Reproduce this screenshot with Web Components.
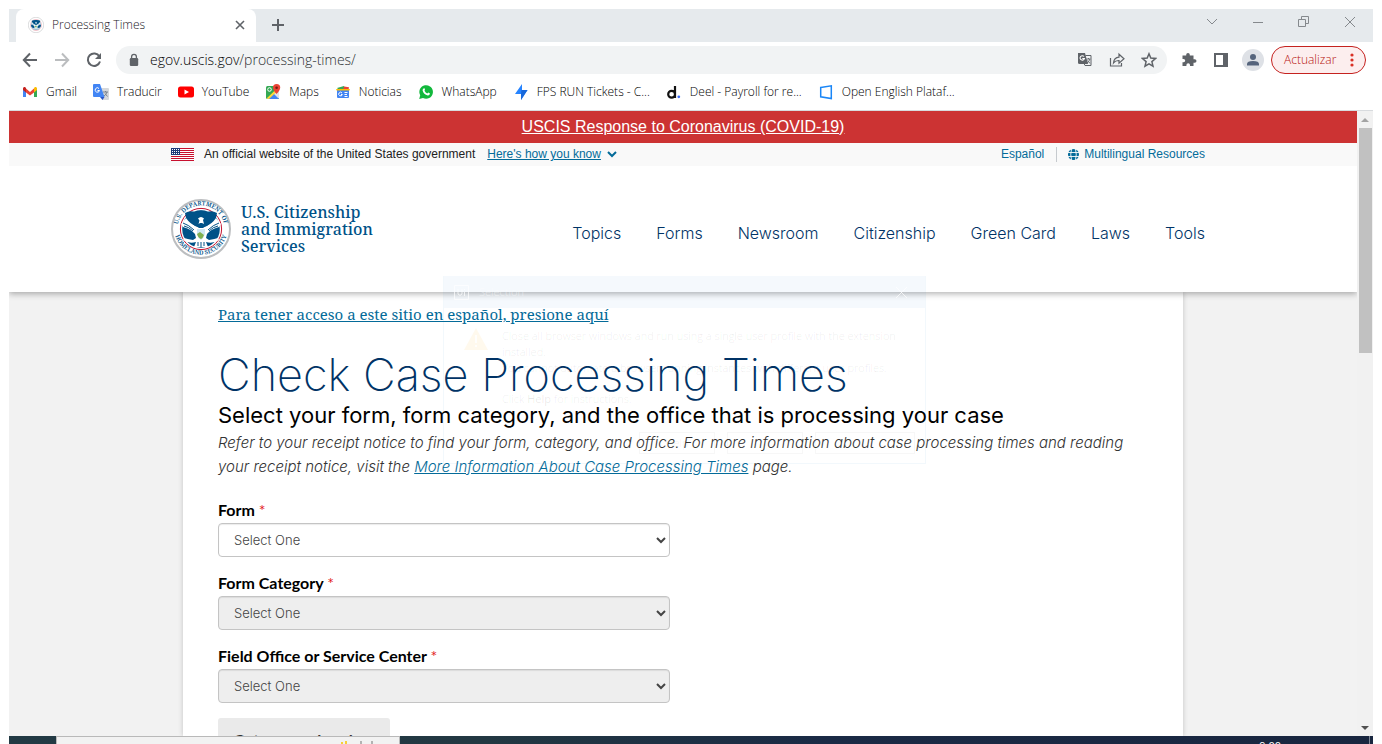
<!DOCTYPE html>
<html lang="en">
<head>
<meta charset="utf-8">
<title>Processing Times</title>
<style>
  html, body { height: 100%; margin: 0; }
  body { background: #fff; overflow: hidden; font-family: "Open Sans", sans-serif; }
</style>
</head>
<body>
<desk-top></desk-top>

<template id="t-desk-top">
  <style>
    :host { display: flex; flex-direction: column; height: 100vh; box-sizing: border-box; padding: 9px 9px 0; position: relative; }
    .pane { flex: 1; min-height: 0; display: flex; border-top: 1px solid #d8dbde; }
    uscis-page { flex: 1; min-width: 0; overflow: hidden; }
    ghost-dialog { position: absolute; left: 443px; top: 276px; }
  </style>
  <tab-strip></tab-strip>
  <tool-bar></tool-bar>
  <bookmarks-bar></bookmarks-bar>
  <div class="pane">
    <uscis-page></uscis-page>
    <scroll-bar></scroll-bar>
  </div>
  <task-bar></task-bar>
  <ghost-dialog></ghost-dialog>
</template>

<template id="t-dhs-seal">
  <style>
    :host { display: block; width: 60px; height: 60px; }
    svg { display: block; width: 100%; height: 100%; }
    text { font: 600 6px "Noto Serif", serif; fill: #005288; }
    .words { display: var(--seal-words, inline); }
  </style>
  <svg viewBox="0 0 60 60" role="img" aria-label="Department of Homeland Security seal">
    <circle cx="30" cy="30" r="29" fill="#fff" stroke="#bcbec0" stroke-width="2"/>
    <circle cx="30" cy="30" r="20.6" fill="#fff" stroke="#c41230" stroke-width="1"/>
    <defs>
      <path id="top" d="M7.300 36.500 A23.600 23.600 0 1 1 52.700 36.500"/>
      <path id="bot" d="M3.600 33.500 A26.800 26.800 0 0 0 56.400 33.500"/>
    </defs>
    <g class="words">
      <text><textPath href="#top" startOffset="50%" text-anchor="middle">U.S. DEPARTMENT OF</textPath></text>
      <text><textPath href="#bot" startOffset="50%" text-anchor="middle">HOMELAND SECURITY</textPath></text>
    </g>
    <circle cx="30" cy="30" r="18.800" fill="#005288"/>
    <path d="M16 18 L10 25 L12 28 Q20 30 24 35 L25 39 L22 41 Q16 40 13 39 L12 41 Q18 45 25 43 L23 48 H37 L35 43 Q42 45 48 41 L47 39 Q44 40 38 41 L35 39 L36 35 Q40 30 48 28 L50 25 L44 18 Q42 22 36 27 L33 28 H27 L24 27 Q18 22 16 18Z" fill="#fff"/>
    <path d="M14 14 Q19 11 24 13 Q30 10 36 13 Q41 11 46 14 L45 19 Q41 25 35 27 L32 29 H28 L25 27 Q19 25 15 19Z" fill="#005288"/>
    <path d="M12 24 Q18 26 23 31 M13 27 Q18 28 22 32 M48 24 Q42 26 37 31 M47 27 Q42 28 38 32" fill="none" stroke="#005288"/>
    <path d="M27 19.500 Q30 16.500 33 19.500 L32 21 L33 25 L31 24 H29 L27.500 25 L28.500 21.500Z" fill="#fff"/>
    <path d="M26 30 H34 V35 Q33 39 30 41 Q27 39 26 35Z" fill="#cfe7f2"/>
    <path d="M26 35 L29 33 L33 36 Q32 39 30 40 Q27 39 26 35Z" fill="#7fb04f"/>
    <path d="M27 43v4 M30 43v5 M33 43v4" stroke="#005288"/>
  </svg>
</template>

<template id="t-tab-strip">
  <style>
    :host { display: flex; height: 33px; background: #e6eaed; padding-left: 7px; }
    .tab { display: flex; align-items: center; width: 240px; box-sizing: border-box; padding: 0 8px 2px 12px; background: #fff; border-radius: 8px 8px 0 0; font: 300 12px/16px "Open Sans", sans-serif; color: #1c2026; }
    .tab dhs-seal { width: 16px; height: 16px; margin-right: 8px; --seal-words: none; }
    .tab span { flex: 1; }
    button { border: 0; background: none; padding: 0; display: grid; place-items: center; height: 16px; width: 16px; }
    .new { width: 44px; height: 31px; }
    .win { margin-left: auto; display: flex; }
    .win button { width: 46px; height: 26px; }
    svg { fill: none; stroke: #5f6368; }
    .win svg { stroke: #85898d; }
  </style>
  <div class="tab"><dhs-seal></dhs-seal><span>Processing Times</span>
    <button aria-label="Close tab"><svg width="10" height="10" stroke-width="1.600"><path d="M1 1l8 8M9 1l-8 8"/></svg></button></div>
  <button class="new" aria-label="New tab"><svg width="14" height="14" stroke-width="2"><path d="M7 1v12M1 7h12"/></svg></button>
  <div class="win">
    <button aria-label="Search tabs"><svg width="12" height="8"><path d="M1 1l5 5 5-5"/></svg></button>
    <button aria-label="Minimize"><svg width="12" height="3"><path d="M1 1.500h10"/></svg></button>
    <button aria-label="Restore"><svg width="12" height="12"><path d="M.5 3.500h7v7h-7zM3.500 3V.5h7v7H8"/></svg></button>
    <button aria-label="Close"><svg width="12" height="12"><path d="M1 1l10 10M11 1L1 11"/></svg></button>
  </div>
</template>

<template id="t-tool-bar">
  <style>
    :host { display: flex; align-items: center; height: 36px; padding: 0 7px 0 5px; background: #fff; }
    button { border: 0; background: none; padding: 0; width: 32px; height: 28px; display: grid; place-items: center; }
    .omni { flex: 1; min-width: 0; display: flex; align-items: center; height: 28px; margin: 0 6px; border-radius: 14px; background: #f1f3f4; padding: 0 2px 0 12px; }
    .omni .lock { margin-right: 10px; }
    .url { flex: 1; font: 300 14px/20px "Open Sans", sans-serif; color: #2b2e31; }
    .url b { font-weight: 300; color: #000; }
    .avatar { width: 22px; height: 22px; margin: 0 7px 0 5px; border-radius: 50%; background: #dee1e6; }
    .update { display: flex; align-items: center; justify-content: space-between; width: 95px; box-sizing: border-box; padding: 0 11px 0 12px; border: 1px solid #c5221f; border-radius: 14px; background: #fceeee; color: #b81410; font: 300 12px/16px "Open Sans", sans-serif; }
    svg { display: block; }
  </style>
  <button aria-label="Back"><svg width="16" height="16" fill="none" stroke="#5f6368" stroke-width="2"><path d="M15 8H2M8 1.500L1.800 8 8 14.500"/></svg></button>
  <button aria-label="Forward"><svg width="16" height="16" fill="none" stroke="#bbbdbf" stroke-width="2"><path d="M1 8h13M8 1.500L14.200 8 8 14.500"/></svg></button>
  <button aria-label="Reload"><svg width="16" height="16" fill="none" stroke="#5f6368" stroke-width="2"><path d="M13.400 4.500A6.200 6.200 0 1 0 14 9.500"/><path d="M15 1v6H9z" fill="#5f6368" stroke="none"/></svg></button>
  <div class="omni">
    <svg class="lock" width="12" height="14"><path d="M3 5h6q1.200 0 1.200 1.200v5.600q0 1.200-1.200 1.200H3q-1.200 0-1.200-1.200V6.200Q1.800 5 3 5z" fill="#5f6368"/><path d="M3.600 6V3.700a2.400 2.400 0 0 1 4.800 0V6" fill="none" stroke="#5f6368" stroke-width="1.300"/></svg>
    <div class="url"><b>egov.uscis.gov</b>/processing-times/</div>
    <button aria-label="Translate page"><svg width="16" height="16"><path d="M1 1h7l3 11H2.500Q1 12 1 10.500z" fill="#5f6368"/><path d="M8.500 3.500h5.500v10H8l-1-2" fill="none" stroke="#5f6368"/><path d="M7 4.500A2.200 2.200 0 1 0 7.400 6.500H5.300" fill="none" stroke="#fff" stroke-width="1.100"/><path d="M9.500 7h4M11.500 6v1M12.800 7q-.6 3-3 4M10.500 8.500q1 2 2.700 2.700" fill="none" stroke="#5f6368" stroke-width=".9"/></svg></button>
    <button aria-label="Share"><svg width="16" height="16" fill="none" stroke="#5f6368" stroke-width="1.200"><path d="M1.500 6v8h11v-3"/><path d="M4.500 11Q5 5.500 10 5.200V2.200l5 4.600-5 4.400V8.500Q6.500 8.300 4.500 11z"/></svg></button>
    <button aria-label="Bookmark this page"><svg width="16" height="16" fill="none" stroke="#5f6368" stroke-width="1.500"><path d="M8 1.800l1.800 4.300 4.700.4-3.600 3.100 1.100 4.600L8 11.800l-4 2.400 1.100-4.600L1.500 6.500l4.700-.4z"/></svg></button>
  </div>
  <button aria-label="Extensions"><svg width="16" height="16"><path d="M1.500 3.500h3.700V2.700a1.800 1.800 0 0 1 3.600 0v.8h3.700v3.700h1.200a1.800 1.800 0 0 1 0 3.600h-1.200V14H9v-1a1.800 1.800 0 0 0-3.600 0v1H1.500v-3.700h1a1.700 1.700 0 0 0 0-3.400h-1z" fill="#5f6368"/></svg></button>
  <button aria-label="Side panel"><svg width="14" height="14"><path d="M0 0h14v14H0zM2 2v10h7V2z" fill="#5f6368" fill-rule="evenodd"/></svg></button>
  <button class="avatar" aria-label="Profile"><svg width="14" height="14" fill="#55647c"><circle cx="7" cy="4" r="3"/><path d="M1 12.500V11Q1 8 7 8t6 3v1.500z"/></svg></button>
  <button class="update"><span>Actualizar</span><svg width="4" height="14" fill="#d93025"><circle cx="2" cy="2" r="1.600"/><circle cx="2" cy="7" r="1.600"/><circle cx="2" cy="12" r="1.600"/></svg></button>
</template>

<template id="t-bookmark-item">
  <style>
    :host { display: block; }
    a { display: flex; align-items: center; gap: 8px; color: #000; text-decoration: none; font: 300 12px/16px "Open Sans", sans-serif; white-space: nowrap; }
    ::slotted(svg) { display: block; width: 16px; height: 16px; }
  </style>
  <a href="#"><slot name="icon"></slot><slot></slot></a>
</template>

<template id="t-bookmarks-bar">
  <style>
    :host { display: flex; align-items: center; gap: 16px; height: 32px; box-sizing: border-box; padding: 0 12px 4px 13px; background: #fff; }
  </style>
  <bookmark-item><svg slot="icon" viewBox="0 0 16 16"><path d="M1 4v9h3V6z" fill="#4285f4"/><path d="M15 4v9h-3V6z" fill="#34a853"/><path d="M4 4.500L8 8l4-3.500v4L8 11.500 4 8.500z" fill="#ea4335"/><path d="M1 4.500Q1 2.500 3 3l1 1v4.500L1 6z" fill="#c5221f"/><path d="M15 4.500Q15 2.500 13 3l-1 1v4.500L15 6z" fill="#fbbc04"/></svg>Gmail</bookmark-item>
  <bookmark-item><svg slot="icon" viewBox="0 0 16 16"><path d="M7 4h8q1 0 1 1v10q0 1-1 1H9z" fill="#d5d8dc"/><path d="M1 0h6l4.500 13H1q-1 0-1-1V1q0-1 1-1z" fill="#4285f4"/><path d="M7 13h4.500L9.500 16z" fill="#2a56c6"/><path d="M6 4.500A2.200 2.200 0 1 0 6.500 6.500H4.500" fill="none" stroke="#fff"/><path d="M10 8h5M12.500 7v1M14 8q-1 3-3 4M12 9.500l2.500 3" fill="none" stroke="#6f7b86" stroke-width=".9"/></svg>Traducir</bookmark-item>
  <bookmark-item><svg slot="icon" viewBox="0 0 16 16"><rect y="2.500" width="16" height="11" rx="2.500" fill="#f00"/><path d="M6.500 5.500v5L11 8z" fill="#fff"/></svg>YouTube</bookmark-item>
  <bookmark-item><svg slot="icon" viewBox="0 0 16 16"><rect x="1" y="2" width="13" height="13" rx="1.500" fill="#34a853"/><path d="M2 15L13 4l1 1v9z" fill="#dfe3e7"/><path d="M8 9l6 6H3z" fill="#4285f4"/><path d="M1.500 14.500L14 2.500v3L4 15z" fill="#fdd835"/><circle cx="4.500" cy="5.500" r="1.800" fill="none" stroke="#fff"/><path d="M11.500 10Q8 6 8 3.700a3.600 3.600 0 0 1 7.200 0Q15.200 6 11.500 10z" fill="#ea4335"/><circle cx="11.600" cy="3.800" r="1.300" fill="#7a1a12"/></svg>Maps</bookmark-item>
  <bookmark-item><svg slot="icon" viewBox="0 0 16 16"><path d="M2 4l7-2 1 3H3z" fill="#34a853"/><path d="M9 2.500l5 .8-.6 3H8z" fill="#ea4335"/><path d="M1 5h14l-1 2H2z" fill="#fbbc04"/><path d="M2 6.500h12V13q0 1-1 1H3q-1 0-1-1z" fill="#4285f4"/><path d="M7 9a1.800 1.800 0 1 0 .3 1.500H6M9.500 8.500h3M9.500 10.500h2.500M9.500 12.500h3" fill="none" stroke="#fff"/></svg>Noticias</bookmark-item>
  <bookmark-item><svg slot="icon" viewBox="0 0 16 16"><path d="M1.200 15l1-3.700A6.800 6.800 0 1 1 5 14z" fill="#12b83c"/><path d="M5.500 4.500q1.200-.8 1.500 1l-.5 1.300Q7.500 8.700 9.300 9.500l1-.9 1.700.9Q11.500 11.700 9.800 11.500 5.500 10.500 4.600 6.500 4.600 5 5.500 4.500z" fill="#fff"/></svg>WhatsApp</bookmark-item>
  <bookmark-item><svg slot="icon" viewBox="0 0 16 16"><path d="M9 0v6h5.500L8 16v-6H2z" fill="#2684ff"/><path d="M8.500 6h6L8 16v-6z" fill="#1868db"/></svg>FPS RUN Tickets - C...</bookmark-item>
  <bookmark-item><svg slot="icon" viewBox="0 0 16 16"><path d="M9 2V14M9 10.200a3.400 3.400 0 1 0-6.800 0 3.400 3.400 0 0 0 6.800 0z" fill="none" stroke="#111" stroke-width="2.200"/><circle cx="12.800" cy="12.800" r="1.400" fill="#3b6cf6"/></svg>Deel - Payroll for re...</bookmark-item>
  <bookmark-item><svg slot="icon" viewBox="0 0 16 16"><path d="M2.700 3.500L13.300 1.800v12.700L2.700 12.800z" fill="none" stroke="#1a86f7" stroke-width="1.500"/></svg>Open English Plataf...</bookmark-item>
</template>

<template id="t-scroll-bar">
  <style>
    :host { display: flex; flex-direction: column; width: 16px; background: #f1f1f1; }
    .up, .down { height: 17px; display: grid; place-items: center; }
    .track { flex: 1; padding: 0 1px 0 2px; }
    .thumb { height: 38%; background: #c1c1c1; }
    svg { display: block; }
  </style>
  <div class="up"><svg width="8" height="4"><path d="M0 4l4-4 4 4z" fill="#a3a3a3"/></svg></div>
  <div class="track"><div class="thumb"></div></div>
  <div class="down"><svg width="8" height="4"><path d="M0 0l4 4 4-4z" fill="#505050"/></svg></div>
</template>

<template id="t-uscis-page">
  <style>
    :host { display: flex; flex-direction: column; background: #f2f2f2; }
    .main { flex: 1; min-height: 0; display: flex; justify-content: center; }
    form-card { width: 1000px; max-width: 100%; }
  </style>
  <site-header></site-header>
  <div class="main"><form-card></form-card></div>
</template>

<template id="t-site-header">
  <style>
    :host { display: block; position: relative; box-shadow: 0 2px 6px rgba(0,0,0,.3); background: #fff; font-family: "Liberation Sans", sans-serif; }
    .alert { background: #cc3333; text-align: center; font-size: 16px; line-height: 32px; }
    .alert a { color: #fff; }
    .gov { background: #f9f9f9; font-size: 12px; line-height: 23px; color: #212121; }
    .wrap { display: flex; align-items: center; max-width: 1034px; margin: 0 auto; padding-left: 10px; }
    .gov a { color: #046b99; }
    .plain { text-decoration: none; display: flex; align-items: center; gap: 5px; }
    .flag { margin-right: 10px; }
    .know { display: flex; align-items: center; gap: 6px; margin-left: 12px; }
    .langs { margin-left: auto; display: flex; align-items: center; }
    .langs i { width: 1px; height: 15px; background: #c6cace; margin: 0 11px 0 12px; }
    .head { height: 126px; }
    .brand { display: flex; align-items: center; gap: 10px; text-decoration: none; color: #005288; font: 500 16px/17px "Noto Serif", serif; }
    nav { margin-left: auto; padding-top: 8px; display: flex; gap: 35px; font: 300 16px/24px Inter, sans-serif; }
    nav a { color: #003366; text-decoration: none; }
    svg { display: block; }
  </style>
  <div class="alert"><a href="#">USCIS Response to Coronavirus (COVID-19)</a></div>
  <div class="gov"><div class="wrap">
    <svg class="flag" width="23" height="13"><path fill="#fff" d="M0 0h23v13H0z"/><path d="M0 .5h23M0 2.500h23M0 4.500h23M0 6.500h23M0 8.500h23M0 10.500h23M0 12.500h23" stroke="#c8102e"/><path fill="#1f3b7a" d="M0 0h9v7H0z"/><path d="M1 1.500h8M1 3.500h8M1 5.500h8" stroke="#fff" stroke-dasharray="1 1"/></svg>
    <span>An official website of the United States government</span>
    <span class="know"><a href="#">Here's how you know</a><svg width="10" height="7" fill="none" stroke="#046b99" stroke-width="2"><path d="M1 1l4 4 4-4"/></svg></span>
    <div class="langs"><a class="plain" href="#">Español</a><i></i><a class="plain" href="#"><svg width="11" height="11"><circle cx="5.500" cy="5.500" r="5.500" fill="#046b99"/><path d="M0 3.500h11M0 7.500h11M3.500 0Q2 5.500 3.500 11M7.500 0Q9 5.500 7.500 11" fill="none" stroke="#f9f9f9" stroke-width=".9"/></svg>Multilingual Resources</a></div>
  </div></div>
  <div class="wrap head">
    <a class="brand" href="#"><dhs-seal></dhs-seal><span>U.S. Citizenship<br>and Immigration<br>Services</span></a>
    <nav><a href="#">Topics</a><a href="#">Forms</a><a href="#">Newsroom</a><a href="#">Citizenship</a><a href="#">Green Card</a><a href="#">Laws</a><a href="#">Tools</a></nav>
  </div>
</template>

<template id="t-select-field">
  <style>
    :host { display: block; margin-bottom: 16px; }
    label { display: block; margin-bottom: 3px; font: 700 16px/20px Lato, sans-serif; color: #000; }
    label span { color: #e31c1c; font-weight: 400; }
    select { display: block; width: 452px; max-width: 100%; height: 34px; box-sizing: border-box; padding: 0 0 0 11px; border: 1px solid #c4c4c4; border-radius: 4px; background-color: #fff; color: #444; box-shadow: inset 0 1px 1px rgba(0,0,0,.08); font: 300 13px/20px Inter, sans-serif; }
    select:disabled { background-color: #eee; opacity: 1; }
  </style>
  <label for="s"><slot></slot> <span>*</span></label>
  <select id="s"><option>Select One</option></select>
</template>

<template id="t-form-card">
  <style>
    :host { display: block; box-sizing: border-box; padding: 10px 35px 0; background: #fff; box-shadow: 0 0 5px rgba(0,0,0,.2); font-family: Inter, sans-serif; }
    a { color: #046b99; }
    .es { display: block; font: 400 15px/24px "Noto Serif", serif; }
    h1 { margin: 23px 0 0; font-weight: 200; font-size: 45px; line-height: 52px; color: #003366; }
    h2 { margin: 0; font-weight: 400; font-size: 22px; line-height: 28px; color: #000; }
    p { margin: 2px 0 21px; font: italic 300 15px/24px Inter, sans-serif; color: #333; }
    button { display: block; width: 172px; height: 44px; padding: 0; border: 0; border-radius: 3px; background: #eaeaea; color: #333; font: 700 16px/20px Lato, sans-serif; }
    .last { margin-bottom: 15px; }
  </style>
  <a class="es" href="#">Para tener acceso a este sitio en español, presione aquí</a>
  <h1>Check Case Processing Times</h1>
  <h2>Select your form, form category, and the office that is processing your case</h2>
  <p>Refer to your receipt notice to find your form, category, and office. For more information about case processing times and reading your receipt notice, visit the <a href="#">More Information About Case Processing Times</a> page.</p>
  <select-field>Form</select-field>
  <select-field disabled>Form Category</select-field>
  <select-field class="last" disabled>Field Office or Service Center</select-field>
  <button>Get processing time</button>
</template>

<template id="t-task-bar">
  <style>
    :host { display: flex; height: 8px; overflow: hidden; background: linear-gradient(90deg, #223a44 0%, #223842 35%, #1a2a45 60%, #19263f 100%); padding-left: 47px; }
    .search { width: 342px; border: 1px solid #b9b9b9; border-bottom: 0; background: #f2f2f2; display: flex; justify-content: flex-end; }
    time { margin-left: auto; margin-right: 88px; font: 400 11px/16px "Open Sans", sans-serif; color: #fff; padding-top: 2px; }
    .peek { width: 1px; background: #7d8796; margin-right: 3px; }
  </style>
  <div class="search"><svg width="60" height="7"><path d="M2 5h2v2H2zM6 4h2v3H6z" fill="#f7cf3b"/><path d="M21 4h2v3h-2zM32 4h2v3h-2z" fill="#b3b3b3"/></svg></div>
  <time>9:00</time><div class="peek"></div>
</template>

<template id="t-ghost-dialog">
  <style>
    :host { display: block; box-sizing: border-box; width: 483px; height: 188px; border: 1px solid rgba(0,110,200,.05); border-top: 0; pointer-events: none; font: 300 11px/16px "Open Sans", sans-serif; color: rgba(0,0,0,.09); }
    header { display: flex; align-items: center; gap: 10px; height: 32px; padding: 0 18px 0 10px; background: rgba(0,110,200,.04); color: rgba(255,255,255,.5); }
    header span { flex: 1; }
    .body { display: grid; grid-template-columns: 24px 1fr; gap: 14px; padding: 20px 12px 0 20px; }
    p { margin: 0; }
    .help { margin-top: 15px; }
    b { font-weight: 400; }
    .foot { display: flex; justify-content: flex-end; gap: 12px; padding: 25px 10px 0 0; }
    button { width: 76px; height: 22px; padding: 0; border: 1px solid rgba(0,0,0,.03); background: none; font: inherit; color: inherit; }
    .wide { width: 100px; }
    svg { display: block; }
  </style>
  <header><svg width="15" height="15" fill="none" stroke="rgba(255,255,255,.7)"><path d="M.5.500h14v14H.5zM4 4v5q2 3 4 0V4M10.500 7v4M10.500 4v1"/></svg><span>Selection</span><svg width="11" height="11" stroke="rgba(255,255,255,.7)"><path d="M0 0l11 11M11 0L0 11"/></svg></header>
  <div class="body">
    <svg width="24" height="22"><path d="M12 0l12 22H0z" fill="rgba(255,165,0,.07)"/><path d="M11 7h2v8h-2zM11 17h2v2h-2z" fill="rgba(255,255,255,.8)"/></svg>
    <div><p>Close all browser windows and run using a single user profile with the extension installed.</p><p>You cannot automate a browser running instances with different user profiles.</p><p class="help">Click <b>Help</b> for instructions.</p></div>
  </div>
  <div class="foot"><button>Help</button><button></button><button class="wide"></button></div>
</template>

<script>
  class TemplateElement extends HTMLElement {
    constructor() {
      super();
      this.attachShadow({ mode: 'open' })
        .append(document.getElementById('t-' + this.localName).content.cloneNode(true));
    }
  }

  for (const name of ['dhs-seal', 'tab-strip', 'tool-bar', 'bookmark-item', 'bookmarks-bar', 'scroll-bar',
                      'site-header', 'form-card', 'uscis-page', 'task-bar', 'ghost-dialog', 'desk-top']) {
    customElements.define(name, class extends TemplateElement {});
  }

  class SelectField extends TemplateElement {
    connectedCallback() {
      this.shadowRoot.querySelector('select').disabled = this.hasAttribute('disabled');
    }
  }
  customElements.define('select-field', SelectField);
</script>
</body>
</html>
